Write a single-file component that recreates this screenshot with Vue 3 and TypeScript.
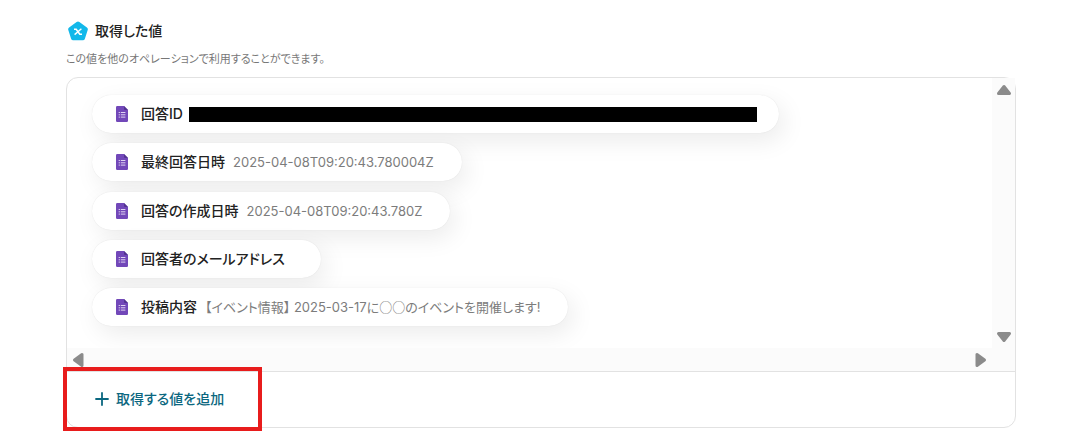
<script setup lang="ts">
interface OutputValue {
  label: string
  value?: string
  masked?: boolean
}

const outputs: OutputValue[] = [
  { label: '回答ID', masked: true },
  { label: '最終回答日時', value: '2025-04-08T09:20:43.780004Z' },
  { label: '回答の作成日時', value: '2025-04-08T09:20:43.780Z' },
  { label: '回答者のメールアドレス' },
  { label: '投稿内容', value: '【イベント情報】 2025-03-17に○○のイベントを開催します!' },
]

// Circle placeholders are set in the Japanese face so that they keep full width.
const segments = (text = ''): string[] => text.split(/(○+)/).filter(Boolean)
</script>

<template>
  <main class="page">
    <header class="head">
      <h1 class="title">
        <svg class="logo" viewBox="0 0 20 20" aria-hidden="true">
          <path d="M8.6 1Q10 0 11.4 1L18.9 6.5Q20.2 7.5 19.7 9L16.9 17.7Q16.4 19.2 14.8 19.2H5.2Q3.6 19.2 3.1 17.7L.3 9Q-.2 7.5 1.1 6.5Z" fill="#12b8ea" />
          <path d="M6 8.2H8.2L11.8 13.2H14" fill="none" stroke="#fff" stroke-width="1.6" />
          <path d="M13.4 7.7L6.6 13.6" fill="none" stroke="#fff" stroke-width="1.4" />
        </svg>
        取得した値
      </h1>
      <p class="note">この値を他のオペレーションで利用することができます。</p>
    </header>

    <section class="panel">
      <div class="viewport">
        <ul class="list">
          <li v-for="item in outputs" :key="item.label" class="pill">
            <svg class="doc" viewBox="0 0 12 16" aria-hidden="true">
              <path d="M1.2 0H8L12 4V14.8Q12 16 10.8 16H1.2Q0 16 0 14.8V1.2Q0 0 1.2 0Z" fill="#7248b9" />
              <path d="M8 0L12 4H9Q8 4 8 3Z" fill="#523490" />
              <path d="M2.7 6.5H3.9M2.7 8.8H3.9M2.7 11.1H3.9M4.8 6.5H9.4M4.8 8.8H9.4M4.8 11.1H9.4" stroke="#e0d4f2" stroke-width="1" />
            </svg>
            <span class="label">{{ item.label }}</span>
            <span v-if="item.masked" class="mask"></span>
            <span v-else class="value"><span v-for="(part, i) in segments(item.value)" :key="i" :class="{ circle: part.startsWith('○') }">{{ part }}</span></span>
          </li>
        </ul>
        <div class="bar vertical">
          <button class="arrow" type="button" aria-label="上へスクロール">
            <svg viewBox="0 0 16 12"><path d="M8 2.5L13.5 9.5H2.5Z" /></svg>
          </button>
          <button class="arrow" type="button" aria-label="下へスクロール">
            <svg viewBox="0 0 16 12"><path d="M8 9.5L13.5 2.5H2.5Z" /></svg>
          </button>
        </div>
        <div class="bar horizontal">
          <button class="arrow side" type="button" aria-label="左へスクロール">
            <svg viewBox="0 0 12 16"><path d="M2.5 8L10 2.5V13.5Z" /></svg>
          </button>
          <button class="arrow side" type="button" aria-label="右へスクロール">
            <svg viewBox="0 0 12 16"><path d="M9.5 8L2 2.5V13.5Z" /></svg>
          </button>
        </div>
        <div class="bar"></div>
      </div>
      <footer class="foot">
        <button class="add" type="button">
          <svg class="plus" viewBox="0 0 14 14" aria-hidden="true">
            <path d="M7 1V13M1 7H13" stroke="currentColor" stroke-width="1.8" stroke-linecap="round" />
          </svg>
          取得する値を追加
        </button>
        <div class="highlight"></div>
      </footer>
    </section>
  </main>
</template>

<style>
body {
  background: #fff;
}
</style>

<style scoped>
.page {
  box-sizing: border-box;
  padding: 20px 59px 20px 66px;
  font-family: Inter, "Noto Sans CJK JP", sans-serif;
  font-feature-settings: "palt";
  color: #222;
}
.title {
  display: flex;
  align-items: center;
  gap: 7px;
  margin: 0;
  padding-left: 2px;
  font-size: 14px;
  line-height: 22px;
  font-weight: 500;
}
.logo {
  width: 20px;
  height: 20px;
}
.note {
  margin: 8px 0 9px;
  font-size: 11px;
  line-height: 18px;
  color: #777;
}
.panel {
  border: 1px solid #e2e2e2;
  border-radius: 12px;
}
.viewport {
  display: grid;
  grid-template-columns: 1fr 23px;
  grid-template-rows: 270px 23px;
  border-bottom: 1px solid #e2e2e2;
}
.list {
  display: flex;
  flex-direction: column;
  align-items: flex-start;
  justify-content: space-between;
  margin: 0;
  padding: 17px 25px 22px;
  list-style: none;
  overflow: hidden;
  border-radius: 12px 0 0 0;
}
.pill {
  display: flex;
  align-items: center;
  box-sizing: border-box;
  height: 38px;
  padding: 0 28px 0 24px;
  border-radius: 19px;
  background: #fff;
  box-shadow: 0 0 1px rgba(0, 0, 0, 0.12), 5px 8px 24px rgba(0, 0, 0, 0.08);
  white-space: nowrap;
}
.doc {
  width: 12px;
  height: 16px;
  margin-right: 13px;
}
.label {
  font-size: 14px;
  line-height: 22px;
  font-weight: 500;
}
.value {
  margin-left: 8px;
  font-size: 13px;
  line-height: 20px;
  color: #7c7c7c;
}
.circle {
  font-family: "Noto Sans CJK JP", sans-serif;
}
.mask {
  width: 568px;
  height: 15px;
  margin-left: 6px;
  margin-right: -6px;
  background: #000;
}
.bar {
  display: flex;
  justify-content: space-between;
  align-items: center;
  background: #fbfbfb;
}
.vertical {
  flex-direction: column;
  padding: 6px 0 5px;
}
.horizontal {
  padding: 0 5px;
}
.arrow {
  display: flex;
  width: 16px;
  height: 12px;
  padding: 0;
  border: 0;
  background: none;
}
.side {
  width: 12px;
  height: 16px;
}
.arrow svg {
  width: 100%;
  height: 100%;
  fill: #8b8b8b;
  stroke: #8b8b8b;
  stroke-width: 3;
  stroke-linejoin: round;
}
.foot {
  position: relative;
  display: flex;
  padding: 16px 28px 17px;
}
.add {
  display: flex;
  align-items: center;
  gap: 7px;
  padding: 0;
  border: 0;
  background: none;
  font: inherit;
  font-feature-settings: inherit;
  font-size: 14px;
  line-height: 22px;
  font-weight: 500;
  color: #0b6780;
}
.plus {
  width: 14px;
  height: 14px;
}
.highlight {
  position: absolute;
  top: -5px;
  bottom: -4px;
  left: -4px;
  box-sizing: border-box;
  width: 199px;
  border: 4px solid #e81c1c;
  pointer-events: none;
}
</style>
